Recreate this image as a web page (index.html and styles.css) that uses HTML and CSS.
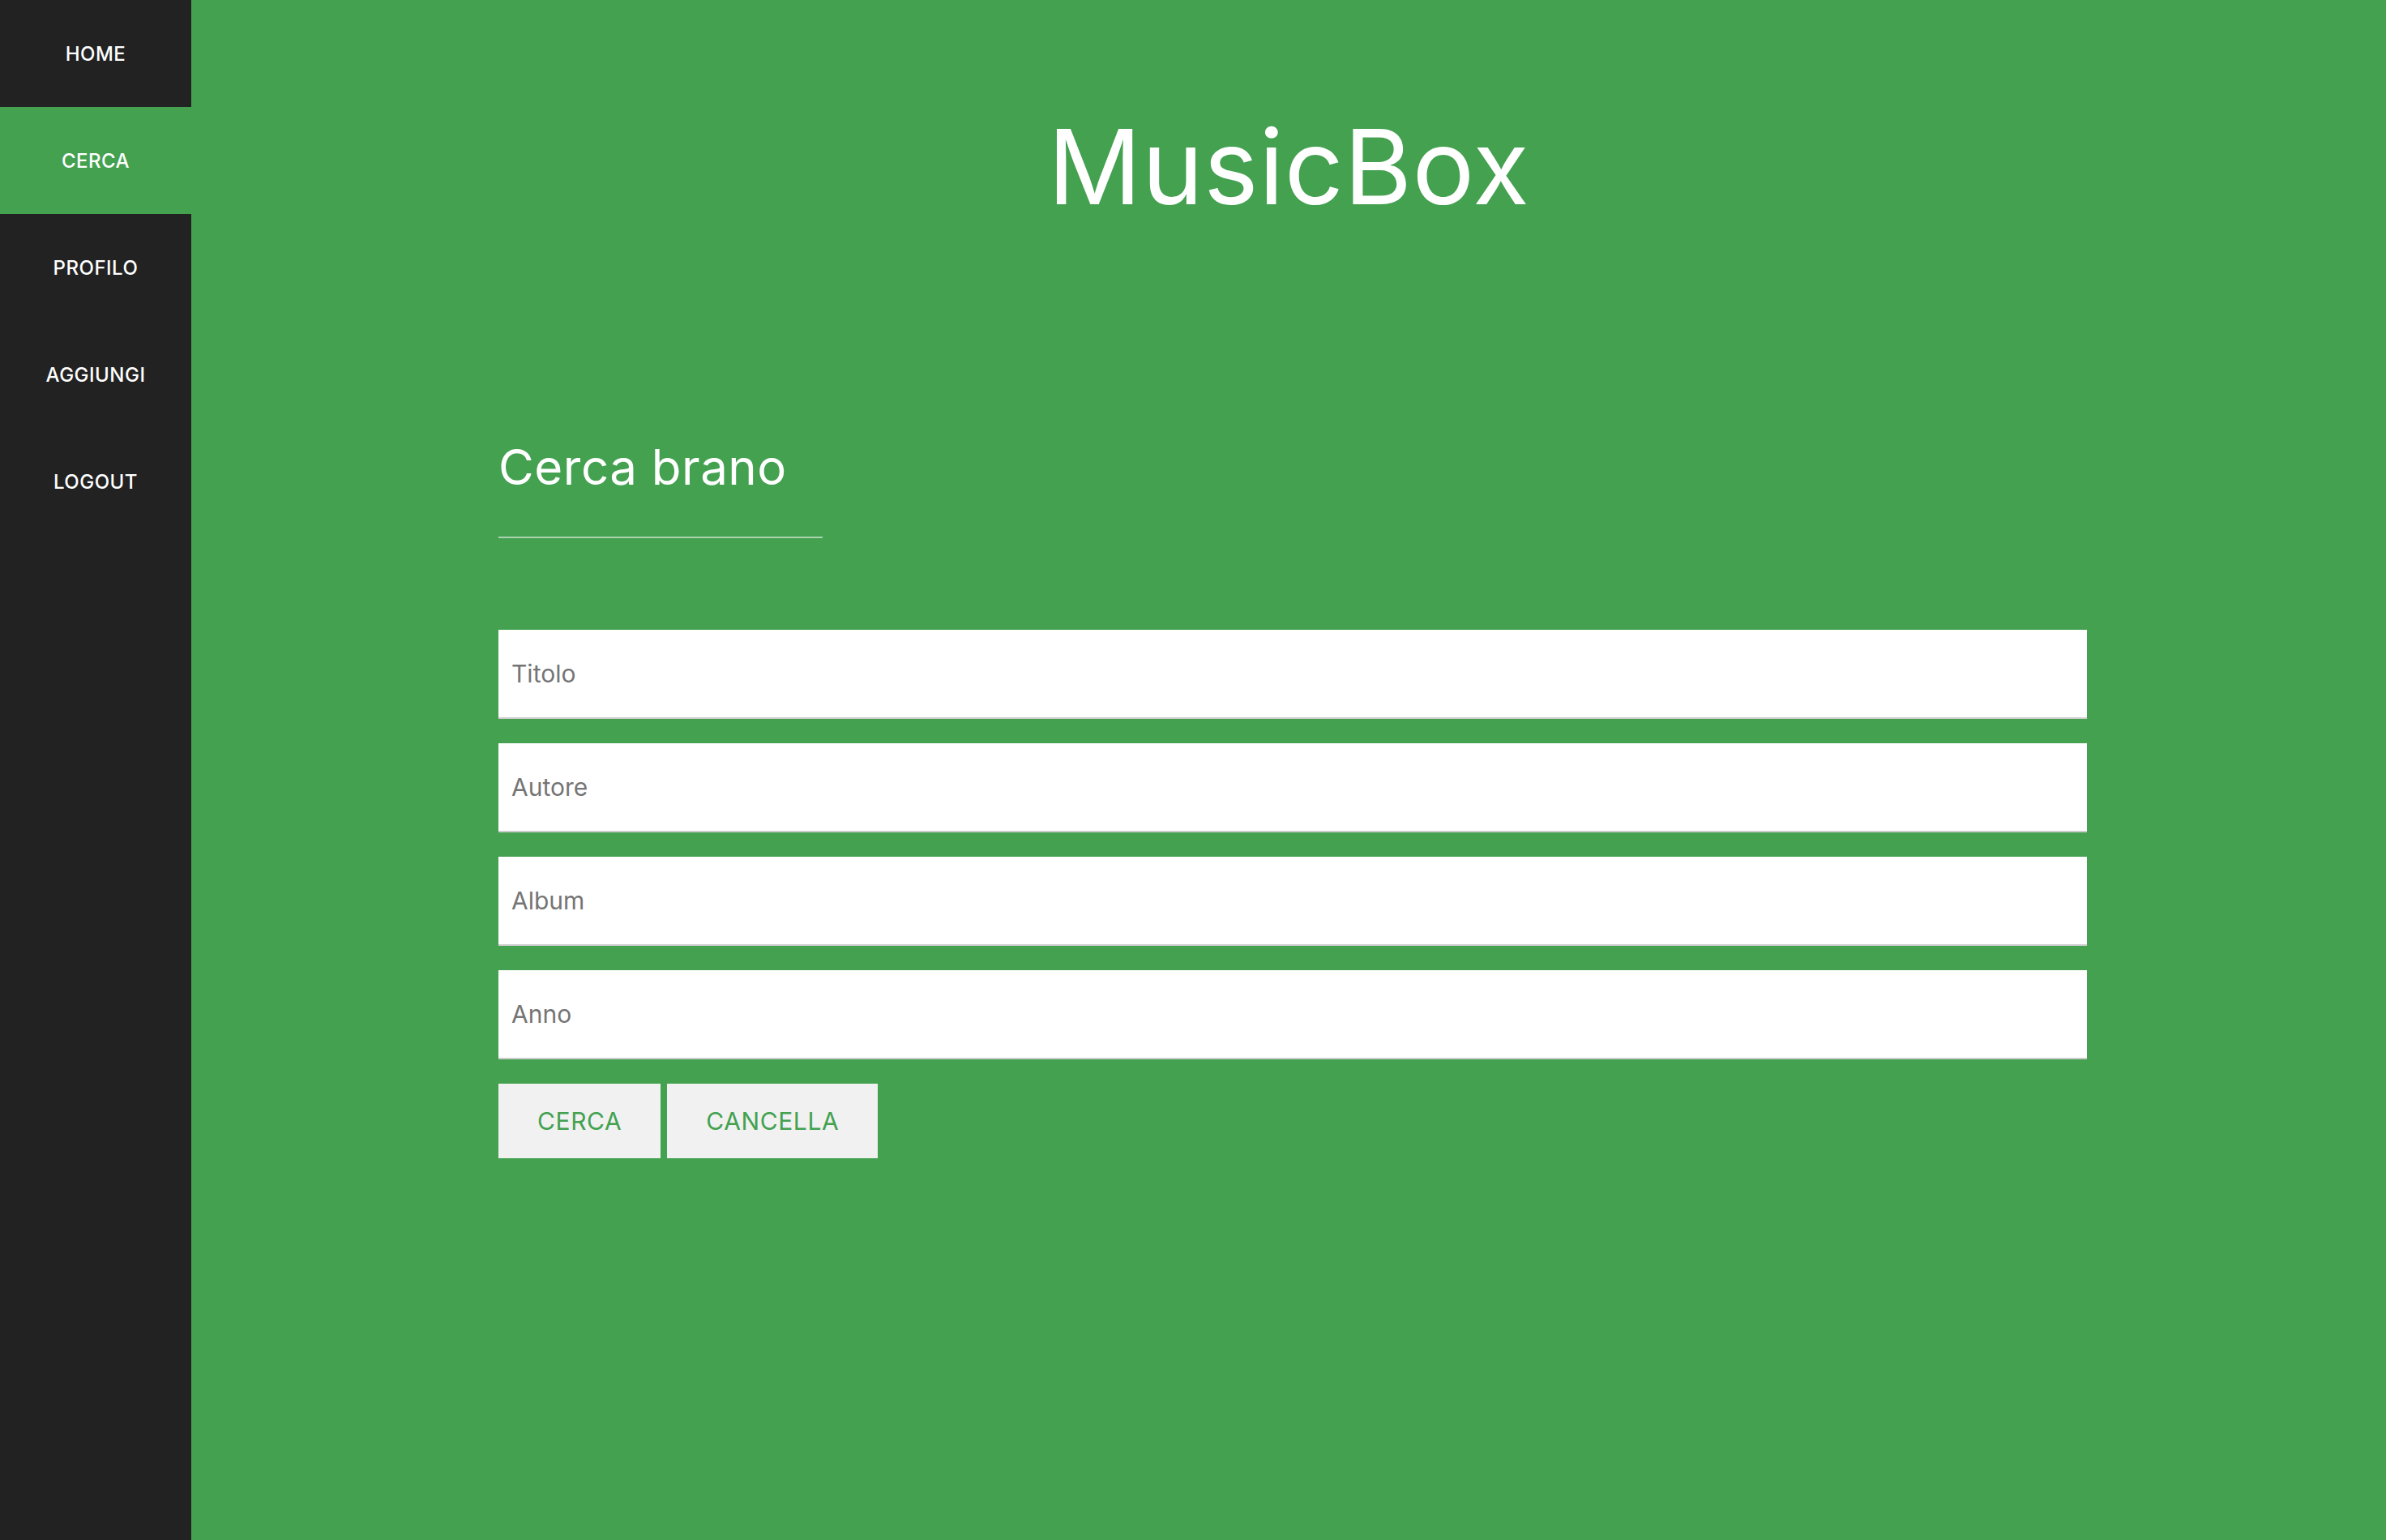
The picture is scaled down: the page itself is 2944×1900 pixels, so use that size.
FILE: index.html
```html
<!DOCTYPE html>
<html lang="it">
<head>
<meta charset="utf-8">
<title>MusicBox - Cerca</title>
<link rel="stylesheet" href="styles.css">
</head>
<body>
<nav class="sidebar">
  <a class="nav-item" href="#">HOME</a>
  <a class="nav-item active" href="#">CERCA</a>
  <a class="nav-item" href="#">PROFILO</a>
  <a class="nav-item" href="#">AGGIUNGI</a>
  <a class="nav-item" href="#">LOGOUT</a>
</nav>
<main class="main">
  <h1 class="brand">MusicBox</h1>
  <section class="search">
    <h2 class="search-title">Cerca brano</h2>
    <hr class="divider">
    <form class="search-form">
      <input class="field" type="text" placeholder="Titolo">
      <input class="field" type="text" placeholder="Autore">
      <input class="field" type="text" placeholder="Album">
      <input class="field" type="text" placeholder="Anno">
      <div class="actions">
        <button class="btn" type="submit">CERCA</button>
        <button class="btn" type="reset">CANCELLA</button>
      </div>
    </form>
  </section>
</main>
</body>
</html>
```
FILE: styles.css
```css
html, body {
  margin: 0;
  padding: 0;
  height: 100%;
}
body {
  display: flex;
  min-height: 100vh;
  font-family: "Inter", "Open Sans", sans-serif;
  background: #43a150;
  color: #fff;
}
.sidebar {
  width: 236px;
  flex: 0 0 236px;
  background: #222222;
  display: flex;
  flex-direction: column;
}
.nav-item {
  height: 132px;
  display: flex;
  align-items: center;
  justify-content: center;
  color: #fff;
  text-decoration: none;
  font-size: 24px;
  font-weight: 500;
  letter-spacing: 0.5px;
}
.nav-item.active {
  background: #43a150;
}
.main {
  flex: 1;
  display: flex;
  flex-direction: column;
}
.brand {
  margin: 142px 0 0;
  font-size: 128px;
  line-height: 128px;
  font-weight: 400;
  text-align: center;
  letter-spacing: 0.5px;
}
.search {
  width: 1960px;
  margin: 276px 0 0 379px;
  display: flex;
  flex-direction: column;
}
.search-title {
  margin: 0;
  font-size: 60px;
  line-height: 60px;
  font-weight: 400;
  letter-spacing: 0.5px;
}
.divider {
  width: 400px;
  height: 2px;
  margin: 56px 0 0;
  border: 0;
  background: rgba(255,255,255,0.55);
}
.search-form {
  margin-top: 113px;
  display: flex;
  flex-direction: column;
  gap: 30px;
}
.field {
  box-sizing: border-box;
  width: 100%;
  height: 110px;
  margin: 0;
  padding: 0 16px;
  border: 0;
  border-bottom: 2px solid #cccccc;
  background: #fff;
  font-family: inherit;
  font-size: 30px;
  color: #333;
  outline: none;
}
.field::placeholder {
  color: #757575;
}
.actions {
  display: flex;
  gap: 8px;
}
.btn {
  height: 92px;
  padding: 0 48px;
  border: 0;
  background: #f1f1f1;
  color: #43a150;
  font-family: inherit;
  font-size: 30px;
  letter-spacing: 0.6px;
  cursor: pointer;
}
```
